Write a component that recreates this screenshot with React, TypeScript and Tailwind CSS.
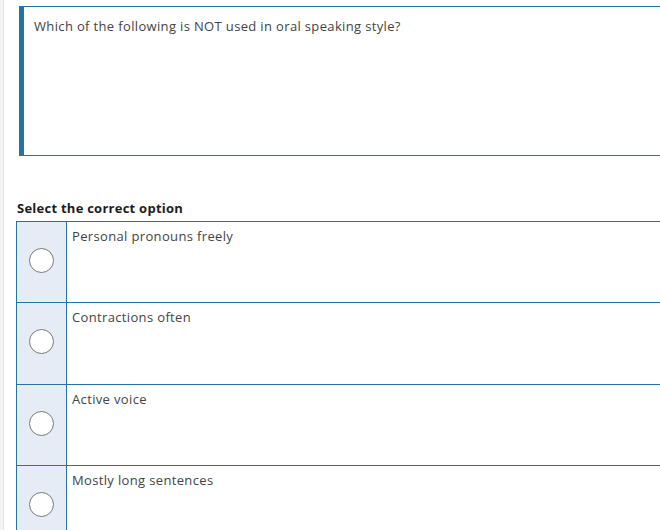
import React from "react";

const options = [
  "Personal pronouns freely",
  "Contractions often",
  "Active voice",
  "Mostly long sentences",
];

// --- Option row ---
const OptionRow = ({ label }: { label: string }) => {
  return (
    <div className="flex h-[81.3px] border-t border-[#2573a0]">
      <div className="w-[50px] shrink-0 bg-[#e6ecf5] border-r border-[#2573a0] flex items-center justify-center pb-[3px]">
        <span className="block w-[25px] h-[25px] rounded-full bg-white border-[1.5px] border-[#7a7a7a]" />
      </div>
      <div className="flex-1 pl-[5px] pt-[4px] text-[13px] leading-[20px] tracking-[0.35px] text-[#444]">{label}</div>
    </div>
  );
};

export default function App() {
  return (
    <div
      className="w-[660px] h-[530px] overflow-hidden bg-white flex"
      style={{ fontFamily: '"Open Sans", "Liberation Sans", sans-serif' }}
    >
      <div className="w-[4px] shrink-0 bg-[#f4f4f4] border-r border-[#e3e3e3]" />

      <div className="flex-1 min-w-0">
        <div className="mt-[6px] ml-[15px] h-[150px] border-t border-b border-l-[5px] border-[#2573a0] pl-[10px] pt-[9px]">
          <p className="text-[13px] leading-[20px] tracking-[0.35px] text-[#444]">
            Which of the following is NOT used in oral speaking style?
          </p>
        </div>

        <div className="mt-[42px] ml-[13px] text-[13px] leading-[20px] font-bold tracking-[0.25px] text-[#1d1d1d]">
          Select the correct option
        </div>

        <div className="mt-[3px] ml-[12px] w-[700px] border-l border-[#2573a0]">
          {options.map((o) => (
            <OptionRow key={o} label={o} />
          ))}
        </div>
      </div>
    </div>
  );
}
